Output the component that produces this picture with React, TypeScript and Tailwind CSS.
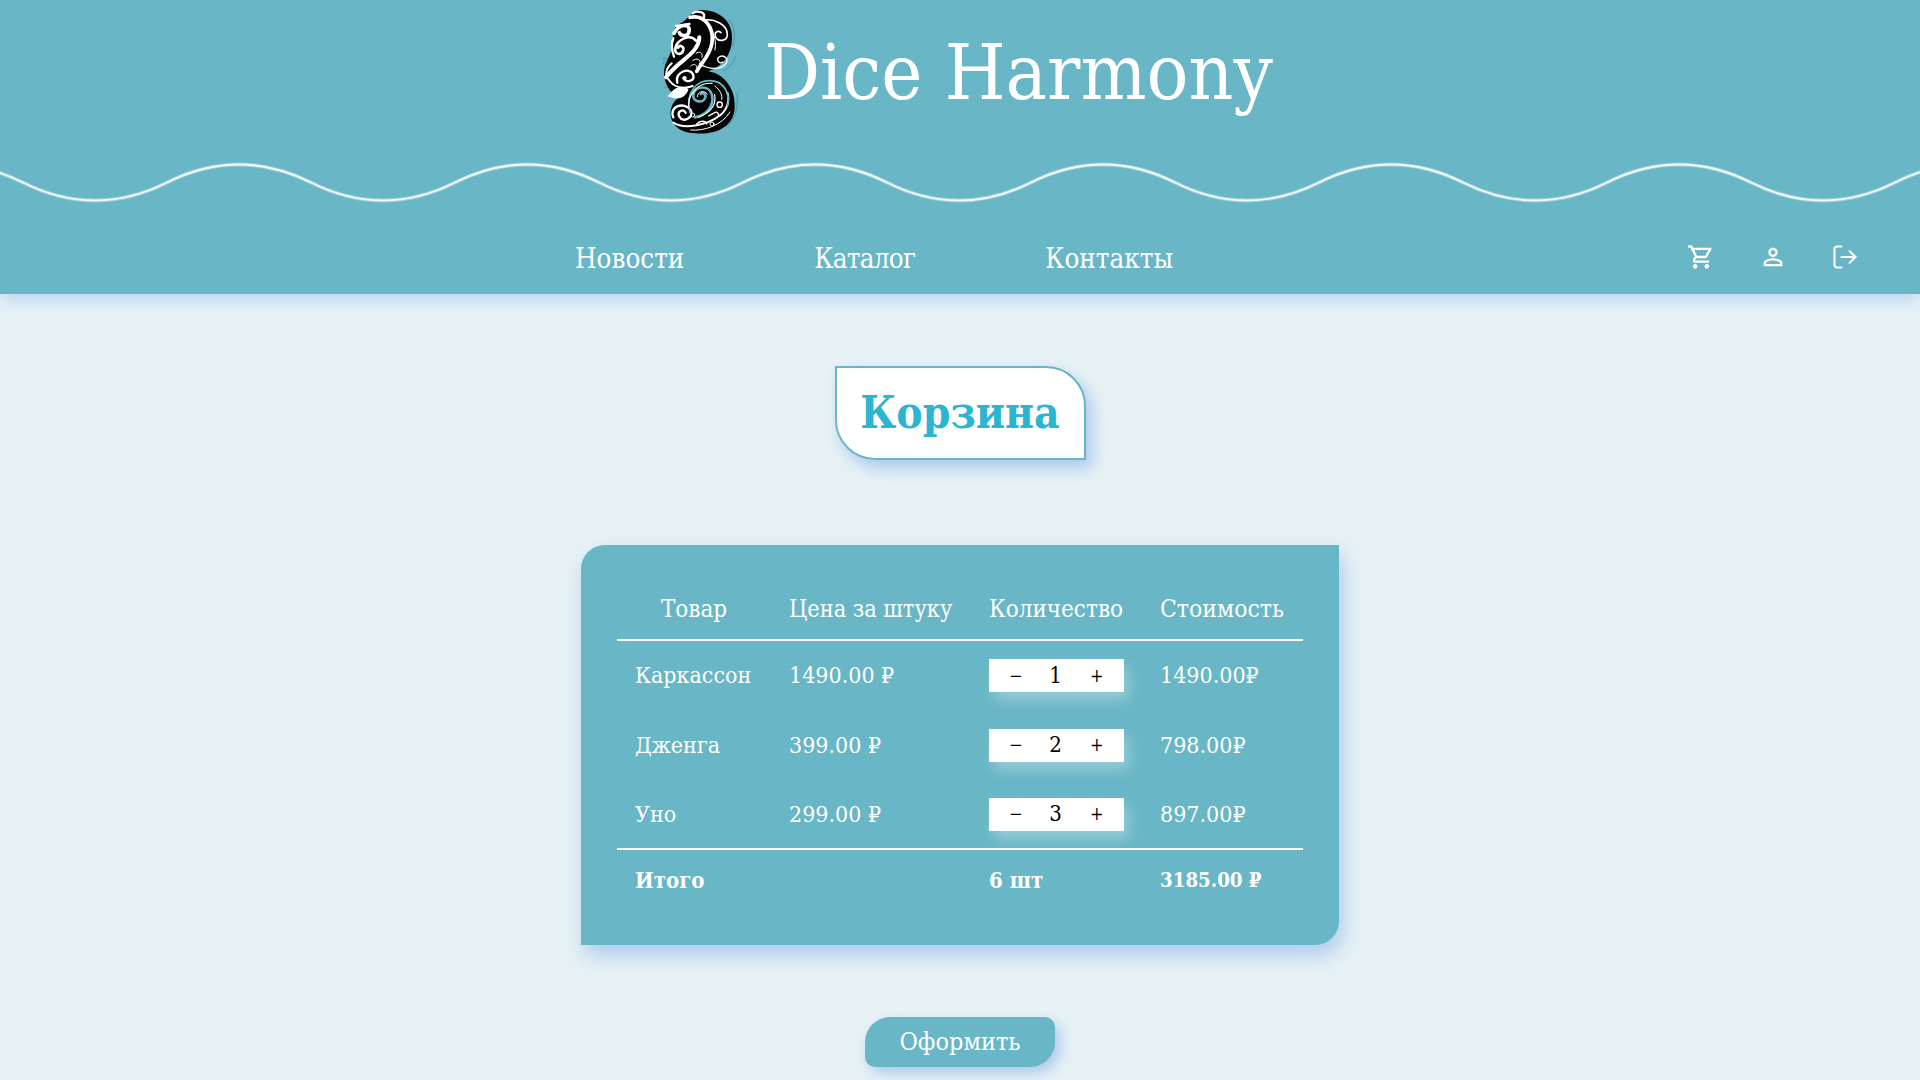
import React from "react";
import { LogOut } from "lucide-react";

const body = "font-['DejaVu_Serif_Condensed','DejaVu_Serif',serif]";

const wavePath =
  "M-121 32.5 Q-49 -3.5 23 32.5" +
  Array.from({ length: 15 }, (_, i) => ` T${167 + i * 144} 32.5`).join("");

function Logo() {
  return (
    <svg viewBox="0 0 360 435" width={120} height={145} className="shrink-0">
      <path d="M175 30C235 26 280 62 276 118C274 165 250 198 205 214C255 222 288 270 284 325C280 380 230 406 165 400C115 398 88 370 92 330C96 312 105 300 118 292C95 285 70 250 72 215C74 185 96 165 98 130C100 100 95 82 122 70C140 62 150 38 175 30Z" fill="#050505" />
      <g fill="none" stroke="#fff" strokeLinecap="round" strokeLinejoin="round">
        <path d="M150 52C196 42 222 85 216 128C211 165 186 186 170 214" strokeWidth="11" />
        <path d="M190 60C225 55 262 75 262 104C262 124 232 128 226 108C222 96 236 90 243 98" strokeWidth="5" />
        <path d="M158 40C172 30 198 36 192 52" strokeWidth="7" />
        <path d="M203 72C214 95 232 110 225 150" strokeWidth="3" />
        <path d="M102 100C118 68 156 70 146 98C140 112 122 108 118 98" strokeWidth="11" />
        <path d="M108 78L148 72" strokeWidth="8" />
        <path d="M178 112C178 150 135 175 110 198C96 212 84 222 78 232" strokeWidth="12" />
        <path d="M168 122C150 100 112 118 106 145C102 164 126 168 130 150C132 138 118 134 114 143" strokeWidth="8" />
        <path d="M102 170C96 155 92 130 100 115" strokeWidth="7" />
        <path d="M95 190C84 200 76 212 80 228" strokeWidth="6" />
        <path d="M178 192C206 208 242 212 258 190C268 174 248 162 236 172C228 180 238 194 248 186" strokeWidth="4" />
        <path d="M112 248C102 216 152 198 160 226C164 244 138 250 130 234" strokeWidth="7" />
        <path d="M84 236C100 262 128 268 158 258" strokeWidth="6" />
        <circle cx="134" cy="234" r="6" fill="#fff" stroke="none" />
        <path d="M158 182C170 172 184 178 180 192M168 160C178 152 190 158 186 172M152 198C160 190 170 192 170 202" strokeWidth="3" />
        <path d="M86 288C102 262 126 256 144 268C138 290 116 302 86 288Z" fill="#fff" strokeWidth="3" />
        <path d="M100 352C86 318 132 304 152 330C164 350 130 372 118 350C110 334 130 324 137 338" strokeWidth="7" />
        <path d="M100 368C130 388 200 378 240 346C262 330 270 300 262 278" strokeWidth="6" />
        <path d="M152 390C192 394 246 376 270 336" strokeWidth="3" />
        <circle cx="239" cy="314" r="8" strokeWidth="4" />
        <circle cx="216" cy="372" r="6" strokeWidth="3" />
        <circle cx="158" cy="345" r="6" strokeWidth="3" />
        <path d="M225 258C240 270 248 285 245 298" strokeWidth="3" />
        <path d="M206 348C222 340 232 328 236 346" strokeWidth="4" />
        <path d="M170 372C180 362 195 360 200 372" strokeWidth="4" />
      </g>
      <g fill="none" stroke="#69b6c6" strokeLinecap="round">
        <path d="M150 338C134 280 170 232 226 244C262 254 270 296 262 318" strokeWidth="5" />
        <path d="M165 352C196 346 224 320 216 285C208 254 164 256 160 286C158 306 190 312 196 292C198 282 188 276 182 282" strokeWidth="8" />
      </g>
      <g fill="none" stroke="#fff" strokeLinecap="round">
        <path d="M147 326C140 284 175 246 216 250" strokeWidth="3.5" />
        <path d="M176 352C206 340 230 318 224 284" strokeWidth="3.5" />
        <path d="M172 290C172 276 190 268 202 282" strokeWidth="3" />
      </g>
      <g fill="none" stroke="#1d3f48" strokeWidth="1.5" strokeLinecap="round" opacity="0.6">
        <path d="M70 175C84 170 92 190 78 196C70 196 68 186 74 184" />
        <path d="M74 262C84 258 92 266 88 272" />
        <path d="M268 60C284 80 288 110 278 140" />
        <path d="M286 170C280 192 262 208 250 212" />
        <path d="M292 280C296 320 284 360 260 380" />
      </g>
    </svg>
  );
}

function CartIcon() {
  return (
    <svg viewBox="0 0 24 24" width={28} height={28} fill="#fff">
      <path d="M15.55 13c.75 0 1.41-.41 1.75-1.03l3.58-6.49c.37-.66-.11-1.48-.87-1.48H5.21l-.94-2H1v2h2l3.6 7.59-1.35 2.44C4.52 15.37 5.48 17 7 17h12v-2H7l1.1-2h7.45zM6.16 6h12.15l-2.76 5H8.53L6.16 6zM7 18c-1.1 0-1.99.9-1.99 2S5.9 22 7 22s2-.9 2-2-.9-2-2-2zm10 0c-1.1 0-1.99.9-1.99 2s.89 2 1.99 2 2-.9 2-2-.9-2-2-2z" />
    </svg>
  );
}

function PersonIcon() {
  return (
    <svg viewBox="0 0 24 24" width={28} height={28} fill="#fff">
      <path d="M12 5.9c1.16 0 2.1.94 2.1 2.1s-.94 2.1-2.1 2.1S9.9 9.16 9.9 8s.94-2.1 2.1-2.1m0 9c2.97 0 6.1 1.46 6.1 2.1v1.1H5.9V17c0-.64 3.13-2.1 6.1-2.1M12 4C9.79 4 8 5.79 8 8s1.79 4 4 4 4-1.79 4-4-1.79-4-4-4zm0 9c-2.67 0-8 1.34-8 4v3h16v-3c0-2.66-5.33-4-8-4z" />
    </svg>
  );
}

const rows = [
  { name: "Каркассон", price: "1490.00 ₽", qty: 1, total: "1490.00₽", h: "h-[70px]" },
  { name: "Дженга", price: "399.00 ₽", qty: 2, total: "798.00₽", h: "h-[70px]" },
  { name: "Уно", price: "299.00 ₽", qty: 3, total: "897.00₽", h: "h-[69px]" },
];

function Qty({ n }: { n: number }) {
  return (
    <div className="flex h-[33px] w-[135px] items-center justify-between bg-white pl-[20px] pr-[22px] text-black shadow-[5px_8px_14px_rgba(255,255,255,0.3)]">
      <span className="w-[12px] text-center text-[18px] leading-none">−</span>
      <span className="text-[22px] leading-none">{n}</span>
      <span className="w-[12px] text-center text-[18px] leading-none">+</span>
    </div>
  );
}

export default function App() {
  return (
    <div className={`h-[1080px] overflow-hidden bg-[#e7f2f5] ${body}`}>
      <header className="relative h-[294px] bg-[#69b6c6] text-white shadow-[0_6px_16px_rgba(120,170,235,0.4)]">
        <div className="flex h-[150px] items-start justify-center pr-[7px]">
          <Logo />
          <h1 className="ml-[4px] mt-[24px] text-[77.5px] leading-[96px] whitespace-nowrap">Dice Harmony</h1>
        </div>
        <svg viewBox="0 0 1920 60" width={1920} height={60} className="block">
          <path d={wavePath} fill="none" stroke="#fff" strokeOpacity="0.35" strokeWidth="4" />
          <path d={wavePath} fill="none" stroke="#fff" strokeOpacity="0.9" strokeWidth="1.8" />
        </svg>
        <nav className="flex h-[84px] items-center pt-[14px] pl-[575px] pr-[61px] text-[27.5px]">
          <div className="flex gap-[130px]">
            <a>Новости</a>
            <a className="tracking-[-0.7px]">Каталог</a>
            <a>Контакты</a>
          </div>
          <div className="mb-[4px] ml-auto flex gap-[44px]">
            <CartIcon />
            <PersonIcon />
            <LogOut size={28} strokeWidth={1.8} color="#fff" />
          </div>
        </nav>
      </header>

      <main className="flex flex-col items-center">
        <h2 className="mt-[72px] flex h-[94px] w-[251px] items-center justify-center rounded-tr-[40px] rounded-bl-[40px] border-2 border-[#69b6c6] bg-white text-[44px] font-bold text-[#2cb5d0] shadow-[6px_8px_16px_rgba(120,165,230,0.55)]">
          Корзина
        </h2>

        <section className="mt-[85px] h-[400px] w-[758px] rounded-tl-[24px] rounded-br-[24px] bg-[#69b6c6] px-[36px] pt-[36px] text-[23px] text-white shadow-[4px_10px_20px_rgba(120,165,230,0.5)]">
          <table className="w-[686px] table-fixed border-collapse">
            <thead>
              <tr className="h-[59px] border-b-2 border-white text-[24px]">
                <th className="w-[154px] px-[18px] pb-[2px] text-center font-normal">Товар</th>
                <th className="w-[200px] px-[18px] pb-[2px] text-left text-[23.3px] font-normal whitespace-nowrap">Цена за штуку</th>
                <th className="w-[171px] px-[18px] pb-[2px] text-left font-normal whitespace-nowrap">Количество</th>
                <th className="w-[161px] px-[18px] pb-[2px] text-left text-[24.5px] font-normal whitespace-nowrap">Стоимость</th>
              </tr>
            </thead>
            <tbody>
              {rows.map((r) => (
                <tr key={r.name} className={r.h}>
                  <td className="px-[18px]">{r.name}</td>
                  <td className="px-[18px]">{r.price}</td>
                  <td className="px-[18px]"><Qty n={r.qty} /></td>
                  <td className="px-[18px]">{r.total}</td>
                </tr>
              ))}
              <tr className="h-[60px] border-t-2 border-white text-[22px] font-bold">
                <td className="px-[18px] pt-[2px]">Итого</td>
                <td className="px-[18px]"></td>
                <td className="px-[18px] pt-[2px]">6 шт</td>
                <td className="whitespace-nowrap px-[18px] pt-[2px] text-[20.3px]">3185.00 ₽</td>
              </tr>
            </tbody>
          </table>
        </section>

        <button className="mt-[72px] h-[50px] w-[190px] rounded-tl-[25px] rounded-tr-[10px] rounded-br-[25px] rounded-bl-[10px] bg-[#69b6c6] text-[25px] text-white shadow-[5px_6px_14px_rgba(120,165,230,0.55)]">
          Оформить
        </button>
      </main>
    </div>
  );
}
